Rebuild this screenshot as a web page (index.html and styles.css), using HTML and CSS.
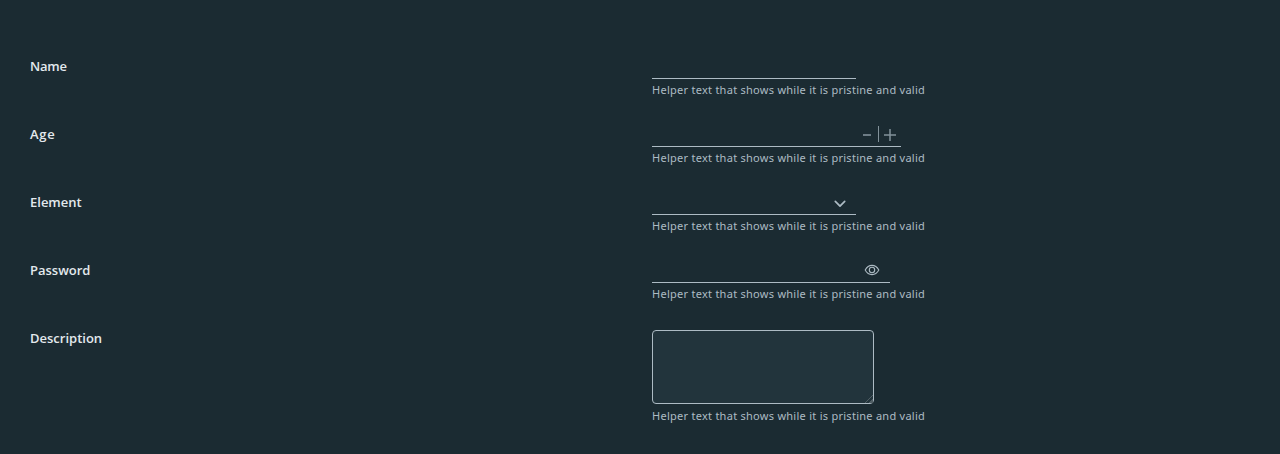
FILE: index.html
```
<!DOCTYPE html>
<html lang="en">
<head>
<meta charset="utf-8">
<title>Form</title>
<link rel="stylesheet" href="styles.css">
</head>
<body>
<form class="form">
  <div class="row">
    <label class="label label-name" for="name">Name</label>
    <div class="control">
      <div class="field"><input class="input" id="name" type="text"></div>
      <span class="helper">Helper text that shows while it is pristine and valid</span>
    </div>
  </div>
  <div class="row">
    <label class="label label-age" for="age">Age</label>
    <div class="control">
      <div class="field field-number">
        <input class="input" id="age" type="text">
        <svg class="stepper" width="36" height="17" viewBox="0 0 36 17" fill="none" stroke="#82929a">
          <path d="M2 9h8" stroke-width="1.6"/><path d="M17.500 0v16"/><path d="M23 9h12M29 3v12" stroke-width="1.5"/>
        </svg>
      </div>
      <span class="helper">Helper text that shows while it is pristine and valid</span>
    </div>
  </div>
  <div class="row">
    <label class="label label-element" for="element">Element</label>
    <div class="control">
      <div class="field field-select">
        <input class="input" id="element" type="text">
        <svg class="caret" width="12" height="8" viewBox="0 0 12 8" fill="none" stroke="#adbbc4" stroke-width="1.7" stroke-linecap="round" stroke-linejoin="round"><path d="M1.3 1.4L6 6.2l4.700-4.800"/></svg>
      </div>
      <span class="helper">Helper text that shows while it is pristine and valid</span>
    </div>
  </div>
  <div class="row">
    <label class="label label-password" for="password">Password</label>
    <div class="control">
      <div class="field field-password">
        <input class="input" id="password" type="password">
        <svg class="eye" width="16" height="12" viewBox="0 0 16 12" fill="none" stroke="#adbbc4" stroke-width="1.100"><path d="M1.200 6C2.700 3.200 5.200 1.400 8 1.400S13.300 3.200 14.800 6C13.300 8.800 10.800 10.600 8 10.600S2.700 8.800 1.200 6z"/><circle cx="8" cy="6" r="2.700"/></svg>
      </div>
      <span class="helper">Helper text that shows while it is pristine and valid</span>
    </div>
  </div>
  <div class="row">
    <label class="label label-description" for="description">Description</label>
    <div class="control control-area">
      <textarea class="textarea" id="description"></textarea>
      <span class="helper">Helper text that shows while it is pristine and valid</span>
    </div>
  </div>
</form>
</body>
</html>
```
FILE: styles.css
```
* { box-sizing: border-box; }
body {
  margin: 0;
  background: #1b2b32;
  font-family: "Noto Sans", sans-serif;
}
.form {
  height: 454px;
  padding: 55px 30px 0;
  overflow: hidden;
}
.row {
  display: grid;
  grid-template-columns: 622px 1fr;
  height: 68px;
}
.label {
  font-family: "Open Sans", sans-serif;
  font-size: 13px;
  font-weight: 600;
  line-height: 22px;
  color: #e3e9ed;
}
.label-name { letter-spacing: -0.2px; }
.label-age { letter-spacing: 0.7px; }
.control { display: flex; flex-direction: column; align-items: flex-start; }
.field {
  display: flex;
  align-items: center;
  width: 204px;
  height: 24px;
  border-bottom: 1px solid #adbbc4;
}
.field-number { width: 249px; padding-right: 4px; }
.field-select { padding-right: 10px; }
.field-password { width: 238px; padding-right: 10px; }
.input {
  flex: 1;
  min-width: 0;
  height: 23px;
  padding: 0 6px;
  border: 0;
  outline: 0;
  background: transparent;
  color: #e3e9ed;
}
.stepper, .eye, .caret { flex: none; }
.caret { margin-top: 2px; }
.eye { margin-bottom: 2px; }
.helper {
  margin-top: 3px;
  font-size: 11px;
  line-height: 16px;
  letter-spacing: 0.268px;
  color: #adbbc4;
  white-space: nowrap;
}
.control-area { padding-top: 3px; }
.textarea {
  flex: none;
  width: 222px;
  height: 74px;
  border: 1px solid #adbbc4;
  border-radius: 4px;
  background: #22343c;
  color: #e3e9ed;
  outline: 0;
}
.textarea::-webkit-resizer {
  background: linear-gradient(135deg, transparent 72%, #4f5d63 72%, #4f5d63 76%, transparent 76%, transparent 85%, #4f5d63 85%);
}
.control-area .helper { margin-top: 4px; }
```
